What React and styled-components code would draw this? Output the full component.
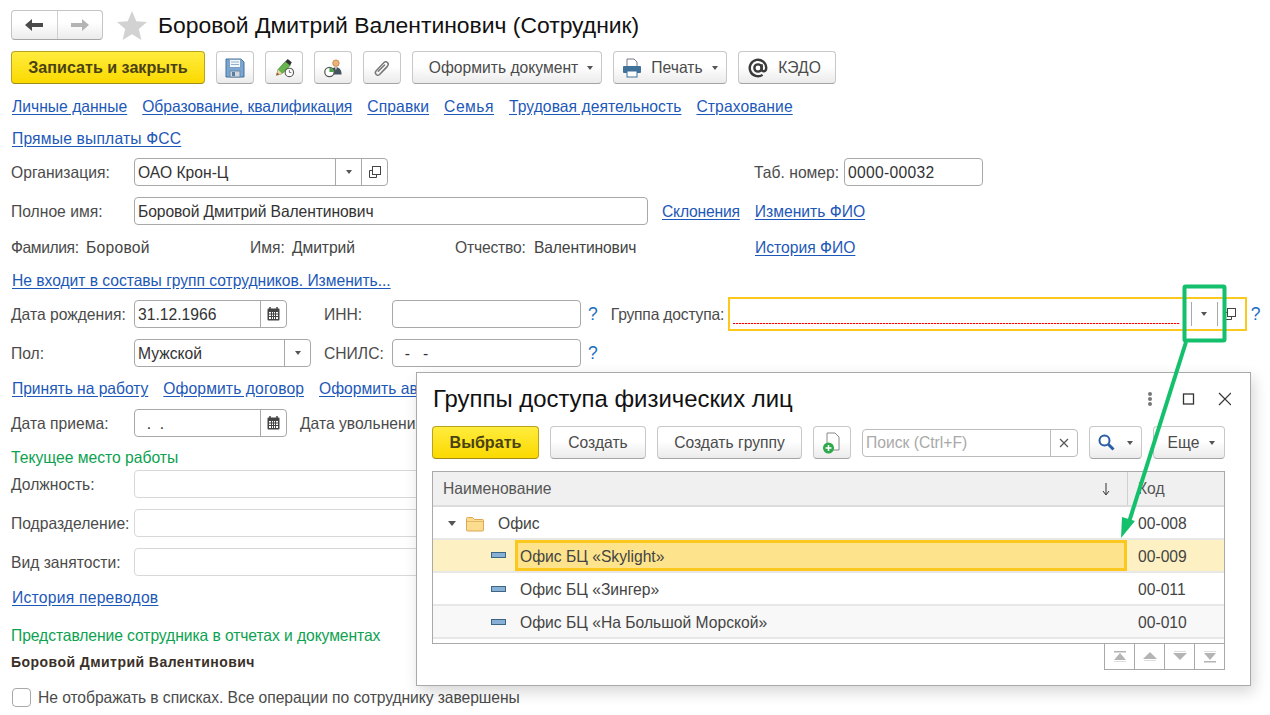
import React from "react";
import styled, { createGlobalStyle, css } from "styled-components";

const Global = createGlobalStyle`
  html, body { margin: 0; padding: 0; background: #fff; }
  body { font-family: "Liberation Sans", Arial, sans-serif; font-size: 15.67px; color: #4b4b4b; }
  * { box-sizing: border-box; }
`;

const Page = styled.div`
  position: relative; width: 1270px; height: 715px; overflow: hidden;
  padding: 10px 0 0 11px; background: #fff;
`;
const Header = styled.div`display: flex; align-items: center; height: 30px;`;
const NavGroup = styled.div`
  display: flex; width: 92px; height: 30px; border: 1px solid #c4c4c4; border-bottom-color: #a6a6a6; border-radius: 4px;
  background: linear-gradient(#fff 40%, #ececec);
`;
const NavBtn = styled.div`
  flex: 1; display: flex; align-items: center; justify-content: center;
  & + & { border-left: 1px solid #d0d0d0; }
`;
const StarWrap = styled.div`margin-left: 13px; width: 32px; height: 30px; display: flex; align-items: center; justify-content: center;`;
const Title = styled.h1`
  margin: 0 0 0 10px; font-weight: 400; font-size: 22.9px; line-height: 30px; color: #111; white-space: nowrap;
`;
const Toolbar = styled.div`display: flex; align-items: center; gap: 11px; height: 33px; margin-top: ${p => p.$mt ?? 11}px;`;
const btnBase = css`
  height: 33px; border: 1px solid #c8c8c8; border-bottom-color: #a4a4a4; border-radius: 4px;
  background: linear-gradient(#fff 45%, #ebebeb);
  display: flex; align-items: center; justify-content: center; color: #4b4b4b; font-size: 15.67px; white-space: nowrap;
`;
const Button = styled.div`
  ${btnBase} width: ${p => p.$w}px; gap: ${p => p.$gap ?? 0}px;
  padding: 0 ${p => p.$pr ?? 0}px 0 ${p => p.$pl ?? 0}px;
`;
const Primary = styled.div`
  ${btnBase} width: ${p => p.$w}px; font-weight: 700; font-size: 16.1px; color: #4a4213;
  background: linear-gradient(#ffec3d, #fbd900); border-color: #b9a21e; border-bottom-color: #a08c18;
`;
const Caret = styled.i`
  display: block; width: 0; height: 0; border-left: 3.5px solid transparent; border-right: 3.5px solid transparent;
  border-top: 4px solid #555; margin-left: ${p => p.$ml ?? 0}px;
`;
const LinkRow = styled.div`display: flex; align-items: center; height: 20px; gap: 15px; padding-left: 1px; margin-top: ${p => p.$mt}px;`;
const A = styled.a`
  color: #1c58b8; text-decoration: underline; text-underline-offset: 2px; white-space: nowrap; padding-top: 2px;
  margin-left: ${p => p.$ml ?? 0}px; letter-spacing: ${p => p.$ls ?? 0}px;
`;
const ButtonLabel = styled.span`margin: 0 ${p => p.$mr ?? 0}px 0 ${p => p.$ml ?? 0}px;`;
const Row = styled.div`display: flex; align-items: center; height: ${p => p.$h ?? 28}px; margin-top: ${p => p.$mt}px;`;
const Label = styled.span`
  width: ${p => p.$w}px; flex: none; white-space: nowrap; padding-top: 2px;
  margin-left: ${p => p.$ml ?? 0}px; letter-spacing: ${p => p.$ls ?? 0}px;
`;
const Value = styled.span`width: ${p => p.$w}px; flex: none; white-space: nowrap; color: #444; padding-top: 2px; letter-spacing: ${p => p.$ls ?? 0}px;`;
const Field = styled.div`
  display: flex; align-items: stretch; flex: none; height: 28px; width: ${p => p.$w}px; margin-left: ${p => p.$ml ?? 0}px;
  border: 1px solid ${p => p.$light ? "#d8d8d8" : "#a8a8a8"}; border-radius: 4px; background: #fff;
`;
const FieldText = styled.div`
  flex: 1; padding: 1px 0 0 3px; line-height: 25px; color: #333; white-space: nowrap; overflow: hidden; letter-spacing: ${p => p.$ls ?? 0}px;
`;
const FieldBtn = styled.div`
  width: ${p => p.$w ?? 26}px; flex: none; display: flex; align-items: center; justify-content: center; border-left: 1px solid #a8a8a8;
`;
const Help = styled.span`color: #1c6cc0; font-size: 17.5px; flex: none; padding-top: 1px; margin-left: ${p => p.$ml}px;`;
const Required = styled.div`
  flex: none; display: flex; align-items: center; width: 519px; height: 34px; margin-left: 4px; padding: 3px 0 3px 3px;
  border: 2px solid #fcc81e; background: #fff;
`;
const RequiredInput = styled.div`width: 455px; height: 100%; padding-top: 21px;`;
const DotLine = styled.div`height: 1px; width: 447px; background: repeating-linear-gradient(90deg, #f00 0 2px, #fbb 2px 3px);`;
const ReqBtn = styled.div`
  width: 26px; height: 100%; flex: none; display: flex; align-items: center; justify-content: center;
  border-left: 1px solid #a8a8a8; margin-left: ${p => p.$ml ?? 0}px;
`;
const Heading = styled.div`height: 20px; line-height: 20px; padding-top: 1px; color: #0ca24f; margin-top: ${p => p.$mt}px; letter-spacing: ${p => p.$ls ?? 0}px;`;
const Strong = styled.div`height: 20px; line-height: 20px; margin-top: 7px; font-weight: 700; font-size: 14px; letter-spacing: .45px; color: #3a3028;`;
const Check = styled.div`width: 19px; height: 19px; margin: 0 7px 0 1px; border: 1px solid #a8a8a8; border-radius: 4px; flex: none;`;

const Dialog = styled.div`
  position: absolute; left: 416px; top: 372px; width: 835px; height: 314px; padding: 0 25px 0 15px;
  background: #fff; border: 1px solid #a9a9a9; box-shadow: 3px 6px 14px rgba(0,0,0,.16);
`;
const DialogHead = styled.div`display: flex; align-items: center; height: 51px;`;
const DialogTitle = styled.h2`margin: 0 0 0 1px; flex: 1; font-weight: 400; font-size: 23.9px; color: #111; white-space: nowrap;`;
const HeadIcons = styled.div`display: flex; align-items: center; margin-right: -6px;`;
const Search = styled.div`
  display: flex; width: 216px; height: 28px; border: 1px solid #bcbcbc; border-radius: 4px; align-self: flex-start; margin-top: 3px;
`;
const SearchText = styled.div`flex: 1; padding-left: 3px; line-height: 26px; color: #a9a9a9;`;
const SearchBtn = styled.div`width: 27px; border-left: 1px solid #bcbcbc; display: flex; align-items: center; justify-content: center;`;
const Table = styled.div`margin-top: 12px; width: 793px; height: 173px; border: 1px solid #a9a9a9; overflow: hidden;`;
const TH = styled.div`
  display: grid; grid-template-columns: 694px 1fr; height: 35px; background: #f0f0f0; border-bottom: 2px solid #dcdcdc; color: #555;
`;
const THCell = styled.div`
  display: flex; align-items: center; justify-content: space-between; padding: 0 16px 0 10px;
  & + & { border-left: 1px solid #d0d0d0; }
`;
const TR = styled.div`
  display: grid; grid-template-columns: 694px 1fr; height: 33px; border-bottom: 2px solid #e7e7e7; color: #444;
  background: ${p => p.$sel ? "#fdf1c3" : p.$alt ? "#f8f8f8" : "#fff"};
`;
const TD = styled.div`
  display: flex; align-items: center; padding: ${p => p.$flush ? 0 : 2}px 0 0 ${p => p.$pl}px; white-space: nowrap;
`;
const Cursor = styled.div`
  margin-left: 9px; flex: 1; align-self: stretch; display: flex; align-items: center; padding: 2px 0 0 2px;
  background: #fde38b; border: 3px solid #fcc81e;
`;
const TreeText = styled.span`margin-left: ${p => p.$ml}px; display: flex;`;
const Tri = styled.i`
  display: block; width: 0; height: 0; border-left: 4px solid transparent; border-right: 4px solid transparent;
  border-top: 5px solid #555;
`;
const Dash = styled.i`
  display: block; width: 15px; height: 6px; background: #88b0d6; border: 1px solid #3d6685; margin-top: -2px;
`;
const Pager = styled.div`display: flex; justify-content: flex-end; margin-top: -1px; width: 793px;`;
const PagerBtn = styled.div`
  width: 31px; height: 27px; border: 1px solid #a9a9a9; margin-left: -1px; display: flex; align-items: center; justify-content: center;
`;
const Overlay = styled.svg`position: absolute; left: 0; top: 0; pointer-events: none;`;

const Floppy = () => (
  <svg width="20" height="20" viewBox="0 0 20 20">
    <path d="M1 1h15l3 3v15H1z" fill="#79a6d2" stroke="#45709b" />
    <rect x="4.5" y="1.5" width="11" height="8" fill="#f4f7fa" stroke="#7d9fc0" />
    <path d="M6 4h8M6 6.5h8" stroke="#8eb0d0" />
    <rect x="5" y="13" width="10" height="6" fill="#cfd8df" stroke="#6c8aa5" />
    <rect x="7" y="14" width="3" height="4" fill="#5d7c99" />
  </svg>
);
const Pencil = () => (
  <svg width="21" height="20" viewBox="0 0 26 24">
    <path d="M3 21l2-7L14 4l6 5-10 10z" fill="#68b54c" stroke="#3c7d2c" strokeWidth=".8" />
    <path d="M14 4l3-3 5 4-2 4z" fill="#333" />
    <path d="M3 21l2-7 5 5z" fill="#efd4a8" />
    <path d="M3 21l1-3.500 2.500 2.500z" fill="#b5412f" />
    <circle cx="19" cy="17.500" r="5.200" fill="#fff" stroke="#555" strokeWidth="1.400" />
    <path d="M19 14.500v3h2.500" fill="none" stroke="#555" />
  </svg>
);
const PersonClock = () => (
  <svg width="21" height="20" viewBox="0 0 26 24">
    <circle cx="16" cy="6" r="4" fill="#eab37a" stroke="#c77f3a" />
    <path d="M9 20c0-6 3-9 7-9s7 3 7 9z" fill="#45535f" />
    <path d="M15 11h2l-1 4z" fill="#fff" />
    <circle cx="8" cy="17" r="5.800" fill="#fff" stroke="#555" strokeWidth="1.500" />
    <path d="M8 17V11.500a5.500 5.500 0 0 1 5.500 5.500z" fill="#4aa347" />
  </svg>
);
const Clip = () => (
  <svg width="20" height="20" viewBox="0 0 20 20" fill="none" stroke="#777" strokeWidth="1.5" strokeLinecap="round">
    <path d="M8 15l7.500-8a2.400 2.400 0 0 0-3.500-3.400L4 12c-2 2.300 1.300 5.700 3.600 3.500L15 8" transform="translate(0 1)" />
    <path d="M6.300 12.300L12.600 6" transform="translate(0 1)" />
  </svg>
);
const Printer = () => (
  <svg width="20" height="20" viewBox="0 0 20 20">
    <path d="M5 1h7l3 3v5H5z" fill="#fff" stroke="#778" />
    <rect x="1" y="8" width="18" height="7" rx="1" fill="#3f7199" />
    <rect x="5" y="13" width="10" height="6" fill="#fff" stroke="#3f7199" />
  </svg>
);
const At = () => (
  <svg width="22" height="22" viewBox="0 0 24 24" fill="none" stroke="#3a3a3a" strokeWidth="2.600">
    <circle cx="12" cy="12" r="4" />
    <path d="M16 8v5.500c0 3 5 3 5-1.500a9 9 0 1 0-4 7.500" />
  </svg>
);
const Open = () => (
  <svg width="14" height="14" viewBox="0 0 14 14" fill="none" stroke="#444">
    <rect x="4.500" y="1.500" width="8" height="8" />
    <path d="M4 5.500H1.500V12.500H8.500V10" />
  </svg>
);
const Calendar = () => (
  <svg width="13" height="14" viewBox="0 0 13 14">
    <rect x="0.500" y="1.500" width="12" height="12" rx="1" fill="#444" />
    <path d="M3 0v3M10 0v3" stroke="#444" strokeWidth="1.500" />
    <path d="M2 5h9v7H2z" fill="#fff" />
    <path d="M2 7h9M2 9.500h9M4.500 5v7M6.500 5v7M8.500 5v7" stroke="#444" />
  </svg>
);
const Glass = () => (
  <svg width="17" height="17" viewBox="0 0 17 17" fill="none" stroke="#2a5da6">
    <circle cx="6.500" cy="6.500" r="5" strokeWidth="2" />
    <path d="M10.500 10.500L15.500 15.500" strokeWidth="3" />
  </svg>
);
const NewDoc = () => (
  <svg width="20" height="22" viewBox="0 0 20 22">
    <path d="M5 1h8l4 4v13H5z" fill="#fff" stroke="#888" />
    <circle cx="6.500" cy="16" r="5.500" fill="#2fa84a" />
    <path d="M3.500 16h6M6.500 13v6" stroke="#fff" strokeWidth="1.600" />
  </svg>
);
const Folder = () => (
  <svg width="18" height="16" viewBox="0 0 18 16">
    <path d="M.5 14V2.500q0-1 1-1h5l2 2h8q1 0 1 1V14q0 1-1 1h-15q-1 0-1-1z" fill="#fcdc8f" stroke="#dca653" />
    <path d="M1 5.500h16" stroke="#e6b766" />
  </svg>
);
const Star = () => (
  <svg width="30" height="29" viewBox="0 0 30 29">
    <path d="M15 0l4.300 10.300 10.700.8-8.200 7 2.600 10.900L15 23.200 5.600 29l2.600-10.900L0 11.100l10.700-.8z" fill="#d2d2d2" />
  </svg>
);
const ArrowLeft = () => (
  <svg width="18" height="12" viewBox="0 0 18 12"><path d="M0 6l7-6v4h11v4H7v4z" fill="#4a4a4a" /></svg>
);
const ArrowRight = () => (
  <svg width="18" height="12" viewBox="0 0 18 12"><path d="M18 6l-7-6v4H0v4h11v4z" fill="#b4b4b4" /></svg>
);
const SortDown = () => (
  <svg width="10" height="14" viewBox="0 0 10 14" fill="none" stroke="#333"><path d="M5 1v11M2 9l3 4 3-4" /></svg>
);
const PagerFirst = () => (
  <svg width="14" height="12" viewBox="0 0 14 12" fill="#b4b4b4"><rect x="1" width="12" height="1.500" /><path d="M7 2l6 7H1z" /><rect x="1" y="10" width="12" height="1" fill="#ddd" /></svg>
);
const PagerUp = () => (
  <svg width="14" height="12" viewBox="0 0 14 12" fill="#b4b4b4"><path d="M7 1l7 7H0z" /><rect x="1" y="9" width="12" height="1" fill="#ddd" /></svg>
);
const PagerDown = () => (
  <svg width="14" height="12" viewBox="0 0 14 12" fill="#b4b4b4"><rect x="1" width="12" height="1" fill="#ddd" /><path d="M0 2h14L7 9z" /></svg>
);
const PagerLast = () => (
  <svg width="14" height="12" viewBox="0 0 14 12" fill="#b4b4b4"><rect x="1" width="12" height="1" fill="#ddd" /><path d="M1 2h12L7 9z" /><rect x="1" y="10" width="12" height="1.500" /></svg>
);

export default function App() {
  return (
    <Page>
      <Global />
      <Header>
        <NavGroup>
          <NavBtn><ArrowLeft /></NavBtn>
          <NavBtn><ArrowRight /></NavBtn>
        </NavGroup>
        <StarWrap><Star /></StarWrap>
        <Title>Боровой Дмитрий Валентинович (Сотрудник)</Title>
      </Header>
      <Toolbar>
        <Primary $w={194}>Записать и закрыть</Primary>
        <Button $w={38}><Floppy /></Button>
        <Button $w={38}><Pencil /></Button>
        <Button $w={38}><PersonClock /></Button>
        <Button $w={38}><Clip /></Button>
        <Button $w={190} $gap={9} $pl={8}>Оформить документ<Caret /></Button>
        <Button $w={114}><Printer /><ButtonLabel $ml={9} $mr={9}>Печать</ButtonLabel><Caret /></Button>
        <Button $w={98} $gap={9} $pr={6}><At />КЭДО</Button>
      </Toolbar>
      <LinkRow $mt={12}>
        <A>Личные данные</A><A $ls={-0.04}>Образование, квалификация</A><A $ls={0.1}>Справки</A><A $ls={0.5}>Семья</A><A $ls={0.05}>Трудовая деятельность</A><A $ls={0.1}>Страхование</A>
      </LinkRow>
      <LinkRow $mt={12}><A $ls={0.17}>Прямые выплаты ФСС</A></LinkRow>
      <Row $mt={10}>
        <Label $w={123}>Организация:</Label>
        <Field $w={254}>
          <FieldText>ОАО Крон-Ц</FieldText>
          <FieldBtn><Caret /></FieldBtn>
          <FieldBtn><Open /></FieldBtn>
        </Field>
        <Label $w={90} $ml={366}>Таб. номер:</Label>
        <Field $w={139}><FieldText $ls={0.3}>0000-00032</FieldText></Field>
      </Row>
      <Row $mt={11}>
        <Label $w={123}>Полное имя:</Label>
        <Field $w={514}><FieldText $ls={-0.1}>Боровой Дмитрий Валентинович</FieldText></Field>
        <A $ml={14} $ls={-0.2}>Склонения</A>
        <A $ml={15}>Изменить ФИО</A>
      </Row>
      <Row $mt={12} $h={20}>
        <Label $w={75} $ls={-0.4}>Фамилия:</Label>
        <Value $w={164} $ls={0.25}>Боровой</Value>
        <Label $w={42}>Имя:</Label>
        <Value $w={163} $ls={-0.1}>Дмитрий</Value>
        <Label $w={79} $ls={-0.2}>Отчество:</Label>
        <Value $w={221} $ls={-0.15}>Валентинович</Value>
        <A>История ФИО</A>
      </Row>
      <LinkRow $mt={13}><A $ls={-0.04}>Не входит в составы групп сотрудников. Изменить...</A></LinkRow>
      <Row $mt={10}>
        <Label $w={123}>Дата рождения:</Label>
        <Field $w={153}><FieldText>31.12.1966</FieldText><FieldBtn><Calendar /></FieldBtn></Field>
        <Label $w={68} $ml={37}>ИНН:</Label>
        <Field $w={189} />
        <Help $ml={7}>?</Help>
        <Label $w={113} $ml={13} $ls={-0.2}>Группа доступа:</Label>
        <Required>
          <RequiredInput><DotLine /></RequiredInput>
          <ReqBtn $ml={3}><Caret /></ReqBtn>
          <ReqBtn><Open /></ReqBtn>
        </Required>
        <Help $ml={4}>?</Help>
      </Row>
      <Row $mt={11}>
        <Label $w={123}>Пол:</Label>
        <Field $w={177}><FieldText>Мужской</FieldText><FieldBtn><Caret /></FieldBtn></Field>
        <Label $w={68} $ml={13}>СНИЛС:</Label>
        <Field $w={189}><FieldText>&nbsp;&nbsp;-&nbsp;&nbsp;&nbsp;-</FieldText></Field>
        <Help $ml={7}>?</Help>
      </Row>
      <LinkRow $mt={11}><A $ls={-0.05}>Принять на работу</A><A $ls={0.1}>Оформить договор</A><A>Оформить аванс</A></LinkRow>
      <Row $mt={11}>
        <Label $w={123}>Дата приема:</Label>
        <Field $w={153}><FieldText>&nbsp;&nbsp;.&nbsp;&nbsp;.</FieldText><FieldBtn><Calendar /></FieldBtn></Field>
        <Label $w={120} $ml={13}>Дата увольнения:</Label>
      </Row>
      <Heading $mt={10}>Текущее место работы</Heading>
      <Row $mt={3}><Label $w={123}>Должность:</Label><Field $w={400} $light /></Row>
      <Row $mt={11}><Label $w={123}>Подразделение:</Label><Field $w={400} $light /></Row>
      <Row $mt={11}><Label $w={123}>Вид занятости:</Label><Field $w={400} $light /></Row>
      <LinkRow $mt={11}><A $ls={0.24}>История переводов</A></LinkRow>
      <Heading $mt={18} $ls={-0.08}>Представление сотрудника в отчетах и документах</Heading>
      <Strong>Боровой Дмитрий Валентинович</Strong>
      <Row $mt={15} $h={20}><Check /><Label $ls={-0.07}>Не отображать в списках. Все операции по сотруднику завершены</Label></Row>

      <Dialog>
        <DialogHead>
          <DialogTitle>Группы доступа физических лиц</DialogTitle>
          <HeadIcons>
            <svg width="100" height="16" viewBox="0 0 100 16">
              <g fill="#777"><circle cx="19" cy="3" r="2" /><circle cx="19" cy="8" r="2" /><circle cx="19" cy="13" r="2" /></g>
              <rect x="52.500" y="3" width="10" height="10" fill="none" stroke="#333" strokeWidth="1.300" />
              <path d="M88 2l12 12M100 2L88 14" stroke="#333" strokeWidth="1.200" />
            </svg>
          </HeadIcons>
        </DialogHead>
        <Toolbar $mt={2}>
          <Primary $w={107}>Выбрать</Primary>
          <Button $w={96}>Создать</Button>
          <Button $w={145}>Создать группу</Button>
          <Button $w={38}><NewDoc /></Button>
          <Search>
            <SearchText>Поиск (Ctrl+F)</SearchText>
            <SearchBtn>
              <svg width="10" height="10" viewBox="0 0 10 10"><path d="M1 1l8 8M9 1L1 9" stroke="#555" strokeWidth="1.200" /></svg>
            </SearchBtn>
          </Search>
          <Button $w={53} $gap={12}><Glass /><Caret /></Button>
          <Button $w={72} $gap={10} $pl={5}>Еще<Caret /></Button>
        </Toolbar>
        <Table>
          <TH>
            <THCell>Наименование<SortDown /></THCell>
            <THCell>Код</THCell>
          </TH>
          <TR>
            <TD $pl={15}><Tri /><TreeText $ml={10}><Folder /></TreeText><TreeText $ml={14}>Офис</TreeText></TD>
            <TD $pl={11}>00-008</TD>
          </TR>
          <TR $sel>
            <TD $pl={58} $flush><Dash /><Cursor>Офис БЦ «Skylight»</Cursor></TD>
            <TD $pl={11}>00-009</TD>
          </TR>
          <TR>
            <TD $pl={58}><Dash /><TreeText $ml={14}>Офис БЦ «Зингер»</TreeText></TD>
            <TD $pl={11}>00-011</TD>
          </TR>
          <TR $alt>
            <TD $pl={58}><Dash /><TreeText $ml={14}>Офис БЦ «На Большой Морской»</TreeText></TD>
            <TD $pl={11}>00-010</TD>
          </TR>
        </Table>
        <Pager>
          <PagerBtn><PagerFirst /></PagerBtn>
          <PagerBtn><PagerUp /></PagerBtn>
          <PagerBtn><PagerDown /></PagerBtn>
          <PagerBtn><PagerLast /></PagerBtn>
        </Pager>
      </Dialog>

      <Overlay width="1270" height="715" viewBox="0 0 1270 715">
        <rect x="1184.500" y="286.500" width="40" height="54" rx="1" fill="none" stroke="#15c06c" strokeWidth="4" />
        <path d="M1186 342L1129 522" stroke="#15c06c" strokeWidth="4" fill="none" />
        <path d="M1121 538l1-21 13 4z" fill="#15c06c" />
      </Overlay>
    </Page>
  );
}
